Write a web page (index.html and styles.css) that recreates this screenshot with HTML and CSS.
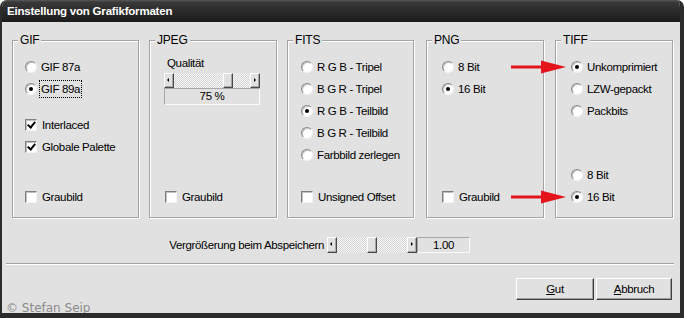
FILE: index.html
```html
<!DOCTYPE html>
<html lang="de">
<head>
    <meta charset="UTF-8">
    <title>Einstellung von Grafikformaten</title>
    <link rel="stylesheet" href="styles.css">
</head>
<body>

<div class="window">
    <div class="titlebar">Einstellung von Grafikformaten</div>

    <div class="client">
        <div class="groups">
            <!-- GIF -->
            <div class="group group-gif">
                <span class="group-title">GIF</span>
                <label class="opt"><span class="radio"></span>GIF 87a</label>
                <label class="opt"><span class="radio checked"></span><span class="focus">GIF 89a</span></label>
                <div class="opts-check">
                    <label class="opt"><span class="check checked"></span>Interlaced</label>
                    <label class="opt"><span class="check checked"></span>Globale Palette</label>
                </div>
                <div class="opts-bottom">
                    <label class="opt"><span class="check"></span>Graubild</label>
                </div>
            </div>

            <!-- JPEG -->
            <div class="group group-jpeg">
                <span class="group-title">JPEG</span>
                <div class="quality-label">Qualität</div>
                <div class="scroll scroll-jpeg">
                    <span class="sb-btn sb-left"></span>
                    <span class="sb-track"><span class="sb-thumb" style="margin-left:49px"></span></span>
                    <span class="sb-btn sb-right"></span>
                </div>
                <div class="value-box jpeg-value">75 %</div>
                <div class="opts-bottom">
                    <label class="opt"><span class="check"></span>Graubild</label>
                </div>
            </div>

            <!-- FITS -->
            <div class="group group-fits">
                <span class="group-title">FITS</span>
                <label class="opt"><span class="radio"></span>R G B - Tripel</label>
                <label class="opt"><span class="radio"></span>B G R - Tripel</label>
                <label class="opt"><span class="radio checked"></span>R G B - Teilbild</label>
                <label class="opt"><span class="radio"></span>B G R - Teilbild</label>
                <label class="opt"><span class="radio"></span>Farbbild zerlegen</label>
                <div class="opts-bottom">
                    <label class="opt"><span class="check"></span>Unsigned Offset</label>
                </div>
            </div>

            <!-- PNG -->
            <div class="group group-png">
                <span class="group-title">PNG</span>
                <label class="opt"><span class="radio"></span>8 Bit</label>
                <label class="opt"><span class="radio checked"></span>16 Bit</label>
                <div class="opts-bottom">
                    <label class="opt"><span class="check"></span>Graubild</label>
                </div>
            </div>

            <!-- TIFF -->
            <div class="group group-tiff">
                <span class="group-title">TIFF</span>
                <label class="opt"><span class="radio checked"></span>Unkomprimiert</label>
                <label class="opt"><span class="radio"></span>LZW-gepackt</label>
                <label class="opt"><span class="radio"></span>Packbits</label>
                <div class="opts-bottom">
                    <label class="opt"><span class="radio"></span>8 Bit</label>
                    <label class="opt"><span class="radio checked"></span>16 Bit</label>
                </div>
            </div>
        </div>

        <div class="zoom-row">
            <span class="zoom-label">Vergrößerung beim Abspeichern</span>
            <div class="scroll scroll-zoom">
                <span class="sb-btn sb-left"></span>
                <span class="sb-track"><span class="sb-thumb" style="margin-left:30px"></span></span>
                <span class="sb-btn sb-right"></span>
            </div>
            <div class="value-box zoom-value">1.00</div>
        </div>

        <div class="separator"></div>

        <div class="buttons">
            <button class="btn btn-ok"><u>G</u>ut</button>
            <button class="btn btn-cancel"><u>A</u>bbruch</button>
        </div>
    </div>

    <div class="copyright">© Stefan Seip</div>

    <svg class="arrow arrow-top" width="56" height="14" viewBox="0 0 56 14">
        <rect x="0" y="5.5" width="32" height="3" fill="#e3141c"/>
        <polygon points="30,0.5 55,7 30,13.5" fill="#e3141c"/>
    </svg>
    <svg class="arrow arrow-bottom" width="56" height="14" viewBox="0 0 56 14">
        <rect x="0" y="5.5" width="32" height="3" fill="#e3141c"/>
        <polygon points="30,0.5 55,7 30,13.5" fill="#e3141c"/>
    </svg>
</div>

</body>
</html>
```

FILE: styles.css
```css
body {
    margin: 0;
    background: #fff;
    font-family: "Liberation Sans", Arial, sans-serif;
    font-size: 11.5px;
    letter-spacing: -0.35px;
    color: #000;
}
.window {
    position: relative;
    width: 684px;
    height: 318px;
    box-sizing: border-box;
    display: flex;
    flex-direction: column;
    background: #e1e1e1;
    border-left: 2px solid #2c2c2c;
    border-right: 4px solid #2c2c2c;
    border-bottom: 5px solid #2c2c2c;
    border-radius: 7px 7px 0 0;
    overflow: hidden;
}
.titlebar {
    height: 22px;
    line-height: 22px;
    padding-left: 5px;
    background: linear-gradient(#5a5a5a 0, #3a3a3a 2px, #2a2a2a 50%, #1c1c1c);
    color: #fff;
    font-weight: bold;
    font-size: 11.5px;
    letter-spacing: -0.2px;
}
.client {
    flex: 1;
    display: flex;
    flex-direction: column;
}

/* group boxes */
.groups {
    display: flex;
    gap: 10px;
    margin-top: 18px;
    padding-left: 10px;
}
.group {
    position: relative;
    box-sizing: border-box;
    height: 178px;
    border: 1px solid #a4a4a4;
    box-shadow: inset 1px 1px 0 #fff, 1px 1px 0 #fff;
    padding: 15px 0 9px 12px;
    display: flex;
    flex-direction: column;
}
.group-gif { width: 127px; }
.group-jpeg { width: 128px; padding-left: 15px; }
.group-fits { width: 127px; padding-left: 13px; }
.group-png { width: 118px; padding-left: 15px; margin-left: 2px; }
.group-tiff { width: 118px; padding-left: 15px; margin-left: 1px; }
.group-title {
    position: absolute;
    top: -8px;
    left: 5px;
    padding: 0 2px;
    line-height: 14px;
    font-size: 12px;
    letter-spacing: -0.2px;
    background: #e1e1e1;
}
.opt {
    display: flex;
    align-items: center;
    height: 22px;
    white-space: nowrap;
}
.opts-check {
    margin-top: 14px;
}
.opts-bottom {
    margin-top: auto;
}
.focus {
    border: 1px dotted #000;
    padding: 1px 1px;
    line-height: 14px;
    margin-left: -2px;
}

/* radio and check */
.radio {
    position: relative;
    width: 12px;
    height: 12px;
    box-sizing: border-box;
    margin-right: 4px;
    border-radius: 50%;
    background: #fff;
    border: 1px solid;
    border-color: #8a8a8a #f4f4f4 #f4f4f4 #8a8a8a;
    box-shadow: inset 1px 1px 0 #c6c6c6;
    flex-shrink: 0;
}
.radio.checked::after {
    content: "";
    position: absolute;
    left: 3px;
    top: 3px;
    width: 4px;
    height: 4px;
    border-radius: 50%;
    background: #000;
}
.check {
    position: relative;
    width: 12px;
    height: 12px;
    box-sizing: border-box;
    margin-right: 5px;
    background: #fff;
    border: 1px solid;
    border-color: #7e7e7e #f4f4f4 #f4f4f4 #7e7e7e;
    box-shadow: inset 1px 1px 0 #c0c0c0;
    flex-shrink: 0;
}
.check.checked::after {
    content: "";
    position: absolute;
    left: 3px;
    top: 0;
    width: 3px;
    height: 6px;
    border-right: 2px solid #000;
    border-bottom: 2px solid #000;
    transform: rotate(40deg);
}

/* JPEG quality */
.quality-label {
    line-height: 15px;
    margin-left: 2px;
}
.scroll {
    display: flex;
    height: 15px;
}
.scroll-jpeg {
    width: 96px;
    margin-top: 2px;
    margin-left: -1px;
}
.sb-btn, .sb-thumb {
    position: relative;
    display: block;
    width: 10px;
    height: 100%;
    box-sizing: border-box;
    background: #e1e1e1;
    border: 1px solid;
    border-color: #fff #4a4a4a #4a4a4a #fff;
    box-shadow: inset -1px -1px 0 #a6a6a6;
    flex-shrink: 0;
}
.sb-btn::after {
    content: "";
    position: absolute;
    top: 50%;
    left: 2px;
    margin-top: -3px;
    border-top: 2px solid transparent;
    border-bottom: 2px solid transparent;
}
.sb-left::after {
    border-right: 2px solid #000;
}
.sb-right::after {
    left: 3px;
    border-left: 2px solid #000;
}
.sb-track {
    flex: 1;
    display: flex;
    background: repeating-conic-gradient(#f7f7f7 0 25%, #d6d6d6 0 50%) 0 0 / 2px 2px;
}
.value-box {
    box-sizing: border-box;
    border: 1px solid;
    border-color: #a8a8a8 #fafafa #fafafa #a8a8a8;
    text-align: center;
}
.jpeg-value {
    width: 96px;
    height: 17px;
    line-height: 15px;
    margin-left: -1px;
}

/* magnification row */
.zoom-row {
    display: flex;
    align-items: center;
    height: 16px;
    margin-top: 19px;
    padding-left: 150px;
}
.zoom-label {
    width: 172px;
    margin-right: 3px;
    text-align: right;
    white-space: nowrap;
}
.scroll-zoom {
    width: 90px;
    height: 16px;
}
.zoom-value {
    width: 53px;
    height: 16px;
    line-height: 14px;
}

.separator {
    height: 0;
    margin: 10px 6px 0 4px;
    border-top: 1px solid #a4a4a4;
    border-bottom: 1px solid #fff;
}

/* buttons */
.buttons {
    display: flex;
    justify-content: flex-end;
    gap: 2px;
    margin-top: 13px;
    padding-right: 8px;
}
.btn {
    height: 22px;
    padding: 0;
    font: inherit;
    letter-spacing: inherit;
    color: #000;
    background: #e1e1e1;
    border: 1px solid;
    border-color: #fff #3c3c3c #3c3c3c #fff;
    box-shadow: inset -1px -1px 0 #a0a0a0;
}
.btn-ok { width: 78px; }
.btn-cancel { width: 76px; }

.copyright {
    position: absolute;
    left: 4px;
    bottom: -2px;
    line-height: 14px;
    font-family: "DejaVu Sans", Verdana, sans-serif;
    font-size: 12px;
    letter-spacing: 0;
    color: #8c8c8c;
}

.arrow {
    position: absolute;
    left: 509px;
}
.arrow-top { top: 60px; }
.arrow-bottom { top: 190px; }
```
